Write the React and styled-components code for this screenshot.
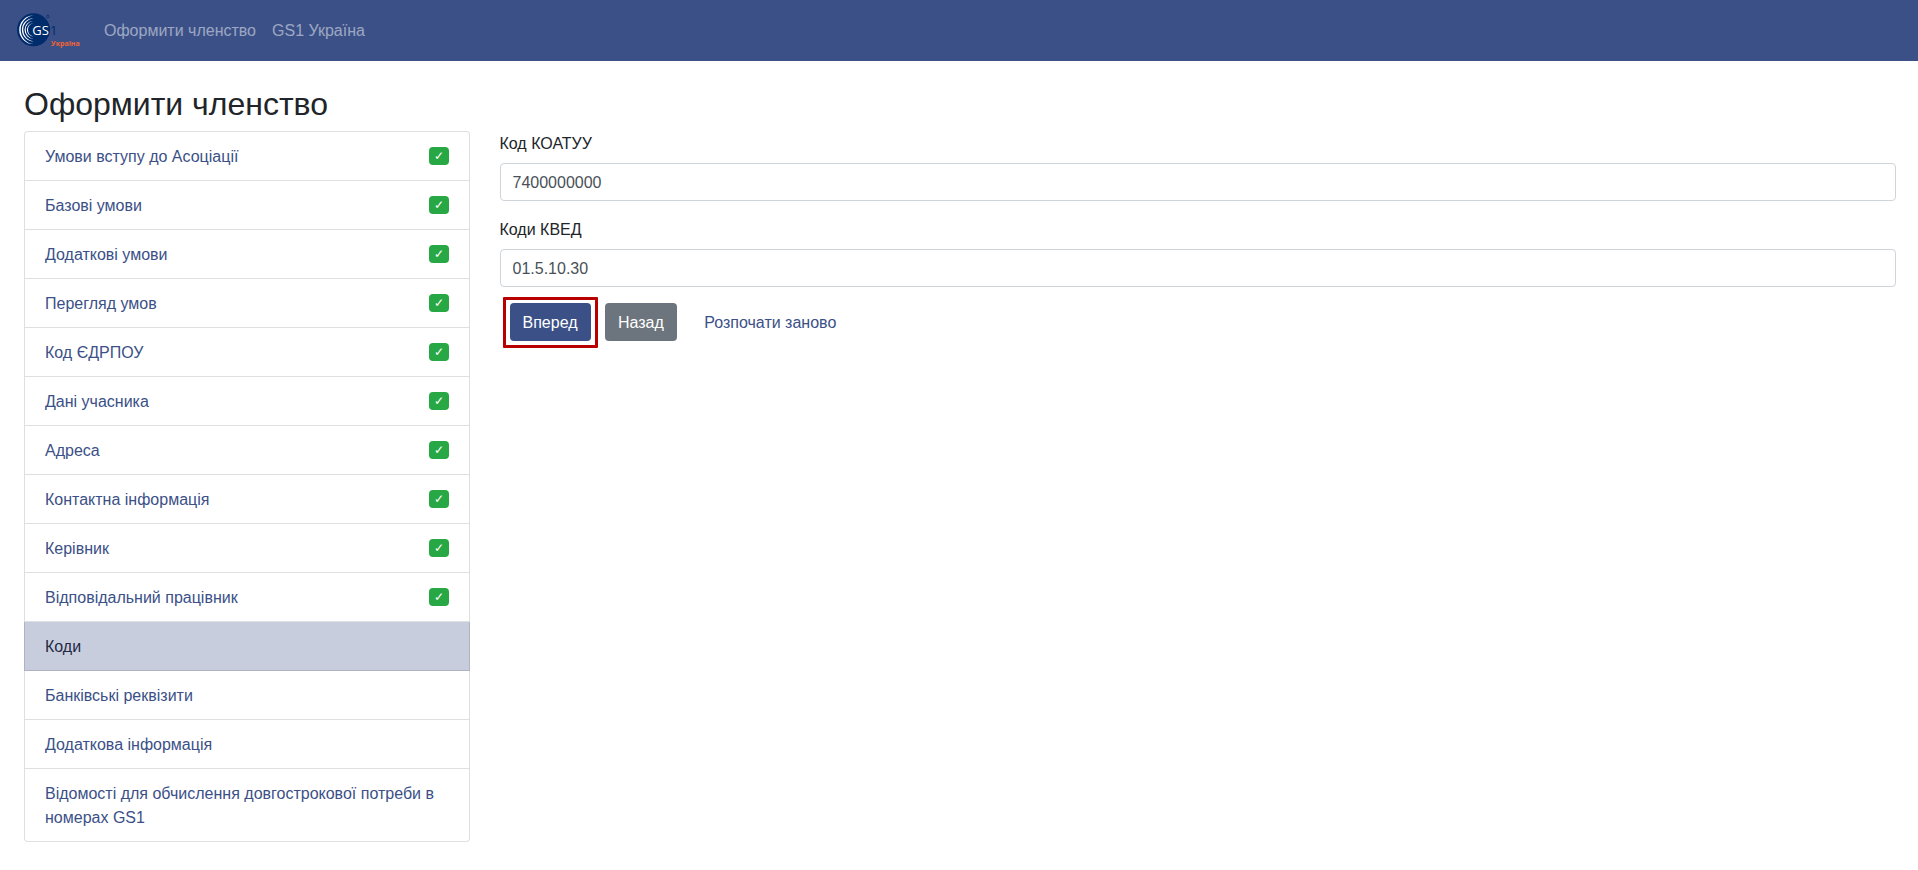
import { useState } from "react";
import styled, { createGlobalStyle, ThemeProvider } from "styled-components";

const theme = {
  primary: "#3b5087",
  secondary: "#6c757d",
  success: "#28a745",
  text: "#212529",
  activeBackground: "#c8cddd",
  activeText: "#1f2a46",
}

const GlobalStyle = createGlobalStyle`
  *, *::before, *::after {
    box-sizing: border-box;
  }

  body {
    margin: 0;
    font-family: "Liberation Sans", Arial, sans-serif;
    font-size: 16px;
    line-height: 1.5;
    color: ${theme.text};
    background-color: #fff;
  }
`

const Navbar = styled.nav`
  display: flex;
  align-items: center;
  gap: 16px;
  padding: 8px 16px;
  background-color: ${props => props.theme.primary};
`

const Brand = styled.a`
  display: flex;
`

const NavLink = styled.a`
  padding: 8px 0 8px 8px;
  color: rgba(255, 255, 255, 0.5);
  text-decoration: none;

  & + & {
    padding-left: 0;
  }

  &:hover {
    color: rgba(255, 255, 255, 0.75);
  }
`

const Page = styled.main`
  padding: 24px 22px 24px 24px;
`

const Title = styled.h1`
  margin: 0 0 8px;
  font-size: 32px;
  font-weight: 500;
  line-height: 1.2;
`

const Row = styled.div`
  display: flex;
  margin: 0 -15px;
`

const Sidebar = styled.aside`
  flex: 0 0 25%;
  padding: 0 15px;
`

const Content = styled.section`
  flex: 1;
  padding: 0 15px;
`

const StepList = styled.ul`
  list-style: none;
  margin: 0;
  padding: 0;
`

const StepItem = styled.li`
  display: flex;
  justify-content: space-between;
  align-items: center;
  padding: 13px 20px 11px;
  border: 1px solid rgba(0, 0, 0, 0.125);
  background-color: ${props => props.$active ? props.theme.activeBackground : "#fff"};
  color: ${props => props.$active ? props.theme.activeText : props.theme.primary};

  & + & {
    border-top-width: 0;
  }

  &:first-child {
    border-radius: 4px 4px 0 0;
  }

  &:last-child {
    border-radius: 0 0 4px 4px;
  }
`

const StepLink = styled.a`
  color: inherit;
  text-decoration: none;
`

const Badge = styled.span`
  margin-bottom: 2px;
  padding: 3px 5px;
  border-radius: 4px;
  background-color: ${props => props.theme.success};
  color: #fff;
  font-size: 12px;
  line-height: 1;
`

const Field = styled.div`
  margin-bottom: 16px;
`

const Label = styled.label`
  display: block;
  padding: 1px 0 7px;
`

const Input = styled.input`
  display: block;
  width: 100%;
  height: 38px;
  padding: 7px 12px 5px;
  border: 1px solid #ced4da;
  border-radius: 4px;
  background-color: #fff;
  color: #495057;
  font: inherit;
`

const Actions = styled.div`
  padding-left: 5px;
`

const Button = styled.button`
  margin: 0 5px;
  padding: 7px 12px 5px;
  border: 1px solid transparent;
  border-radius: 4px;
  background-color: ${props => props.theme[props.$variant]};
  color: #fff;
  font: inherit;
  cursor: pointer;
`

// square red frame drawn over the main action
const HighlightedButton = styled(Button)`
  position: relative;

  &::after {
    content: '';
    position: absolute;
    inset: -7px -8px -8px;
    border: 3px solid #b80000;
    border-radius: 1px;
    pointer-events: none;
  }
`

const LinkButton = styled(Button)`
  background-color: transparent;
  color: ${props => props.theme.primary};
`

const steps = [
  { name: "Умови вступу до Асоціації", done: true },
  { name: "Базові умови", done: true },
  { name: "Додаткові умови", done: true },
  { name: "Перегляд умов", done: true },
  { name: "Код ЄДРПОУ", done: true },
  { name: "Дані учасника", done: true },
  { name: "Адреса", done: true },
  { name: "Контактна інформація", done: true },
  { name: "Керівник", done: true },
  { name: "Відповідальний працівник", done: true },
  { name: "Коди", active: true },
  { name: "Банківські реквізити" },
  { name: "Додаткова інформація" },
  { name: "Відомості для обчислення довгострокової потреби в номерах GS1" },
]

function Logo() {
  return (
    <svg width="64" height="45" viewBox="0 0 64 45" role="img" aria-label="GS1 Україна">
      <circle cx="17.5" cy="21.8" r="16.5" fill="#002c6c" />
      <g fill="#fff">
        <path d="M17.5 7.5A14.3 14.3 0 0 0 17.5 36.1A14.39 14.39 0 0 1 17.5 7.5Z" />
        <path d="M17.5 10.2A11.6 11.6 0 0 0 17.5 33.4A11.68 11.68 0 0 1 17.5 10.2Z" />
        <path d="M17.5 12.8A9 9 0 0 0 17.5 30.8A9.09 9.09 0 0 1 17.5 12.8Z" />
        <path d="M17.5 15.2A6.6 6.6 0 0 0 17.5 28.4A6.71 6.71 0 0 1 17.5 15.2Z" />
      </g>
      <text x="16.3" y="26.8" fontFamily="Open Sans" fontSize="13" fill="#fff" stroke="#002c6c" strokeWidth="2" paintOrder="stroke">GS</text>
      <text x="34" y="26.8" fontFamily="Open Sans" fontSize="13" fill="#002c6c">1</text>
      <circle cx="31.8" cy="8.5" r="1.3" fill="none" stroke="#002c6c" strokeWidth="0.8" />
      <text x="35" y="38" fontFamily="Open Sans" fontSize="7" fontWeight="700" fill="#f26334">Україна</text>
    </svg>
  )
}

export default function App() {
  const [koatuu, setKoatuu] = useState("7400000000")
  const [kved, setKved] = useState("01.5.10.30")

  return (
    <ThemeProvider theme={theme}>
      <GlobalStyle />
      <Navbar>
        <Brand href="#">
          <Logo />
        </Brand>
        <NavLink href="#">Оформити членство</NavLink>
        <NavLink href="#">GS1 Україна</NavLink>
      </Navbar>
      <Page>
        <Title>Оформити членство</Title>
        <Row>
          <Sidebar>
            <StepList>
              {steps.map(step => (
                <StepItem key={step.name} $active={step.active}>
                  {step.active ? step.name : <StepLink href="#">{step.name}</StepLink>}
                  {step.done && <Badge>✓</Badge>}
                </StepItem>
              ))}
            </StepList>
          </Sidebar>
          <Content>
            <form onSubmit={e => e.preventDefault()}>
              <Field>
                <Label htmlFor="koatuu">Код КОАТУУ</Label>
                <Input id="koatuu" type="text" value={koatuu} onChange={e => setKoatuu(e.target.value)} />
              </Field>
              <Field>
                <Label htmlFor="kved">Коди КВЕД</Label>
                <Input id="kved" type="text" value={kved} onChange={e => setKved(e.target.value)} />
              </Field>
              <Actions>
                <HighlightedButton type="submit" $variant="primary">Вперед</HighlightedButton>{" "}
                <Button type="button" $variant="secondary">Назад</Button>{" "}
                <LinkButton type="button">Розпочати заново</LinkButton>
              </Actions>
            </form>
          </Content>
        </Row>
      </Page>
    </ThemeProvider>
  )
}
